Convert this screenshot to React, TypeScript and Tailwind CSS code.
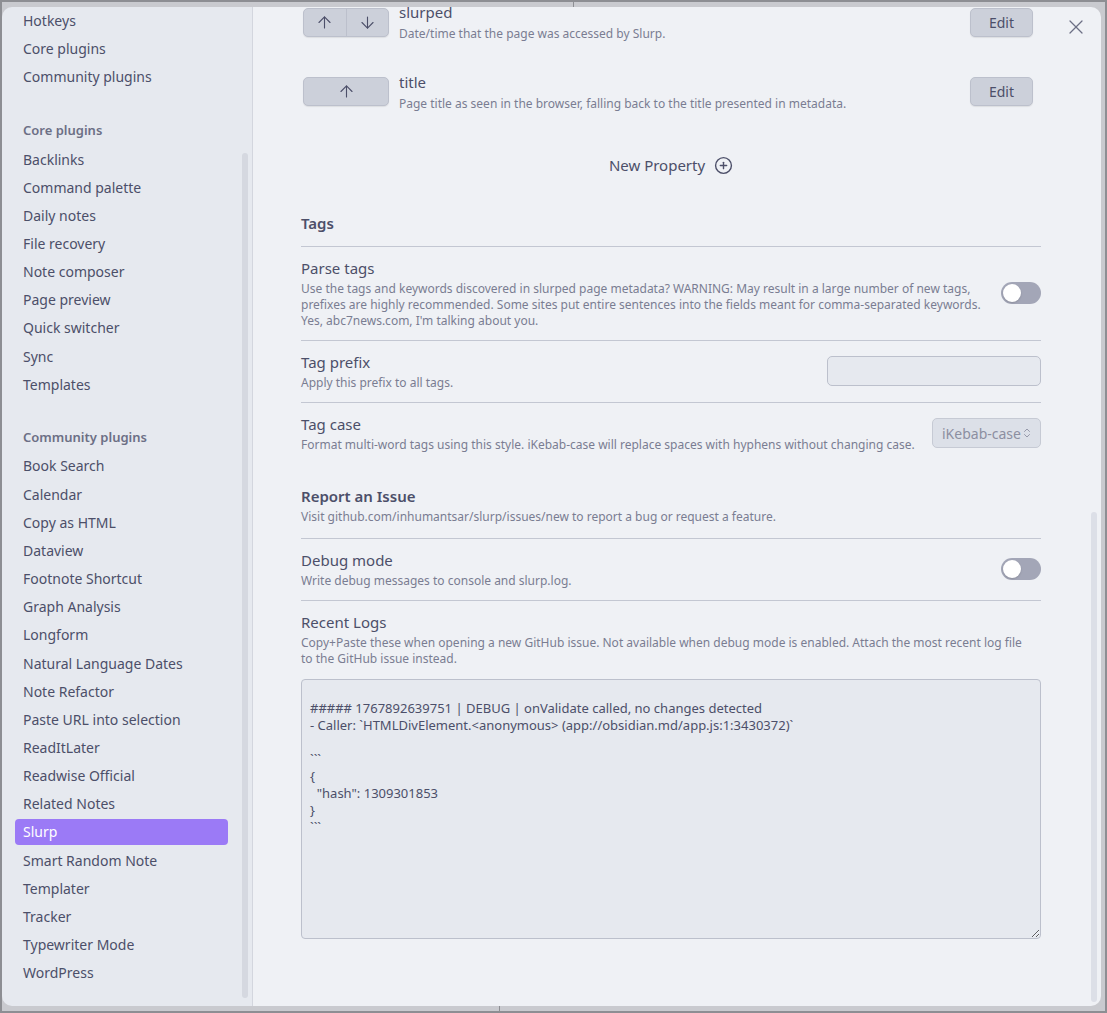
import { ArrowUp, ArrowDown, X, CirclePlus, ChevronsUpDown } from "lucide-react"

// --- Sidebar data ---
const topItems = ["Hotkeys", "Core plugins", "Community plugins"]
const coreItems = ["Backlinks", "Command palette", "Daily notes", "File recovery", "Note composer", "Page preview", "Quick switcher", "Sync", "Templates"]
const communityItems = [
    "Book Search", "Calendar", "Copy as HTML", "Dataview", "Footnote Shortcut", "Graph Analysis", "Longform",
    "Natural Language Dates", "Note Refactor", "Paste URL into selection", "ReadItLater", "Readwise Official",
    "Related Notes", "Slurp", "Smart Random Note", "Templater", "Tracker", "Typewriter Mode", "WordPress",
]

const logText = `
##### 1767892639751 | DEBUG | onValidate called, no changes detected
- Caller: \`HTMLDivElement.<anonymous> (app://obsidian.md/app.js:1:3430372)\`

\`\`\`
{
  "hash": 1309301853
}
\`\`\``

const NavItem = ({ label, active }: { label: string; active?: boolean }) => (
    <div className={`h-[26.17px] my-[1px] ml-[13px] mr-[24px] pl-[8px] rounded-[4px] flex items-center text-[14px] ${active ? "bg-[#9b7af6] text-white" : "text-[#4c4f69]"}`}>
        {label}
    </div>
)

const NavHeader = ({ label }: { label: string }) => (
    <div className="h-[29px] pl-[21px] flex items-center text-[13px] font-semibold text-[#6c6f85]">{label}</div>
)

const Toggle = () => (
    <div className="w-[40px] h-[22px] rounded-full bg-[#a3a6b7] flex items-center px-[2px] shrink-0">
        <div className="w-[18px] h-[18px] rounded-full bg-white shadow-[0_1px_2px_rgba(0,0,0,0.15)]" />
    </div>
)

const btn = "bg-[#ccd0da] border border-[#bcc0cc] shadow-[0_1px_1px_rgba(0,0,0,0.08)] text-[#4c4f69]"

const PropertyRow = ({ name, desc, down }: { name: string; desc: string; down?: boolean }) => (
    <div className="h-[69.5px] flex items-center">
        <div className={`ml-[2px] w-[86px] h-[29px] rounded-[5px] flex overflow-hidden ${btn}`}>
            <div className={`flex-1 flex items-center justify-center ${down ? "border-r border-[#bcc0cc]" : ""}`}>
                <ArrowUp size={19} strokeWidth={1.4} />
            </div>
            {down && (
                <div className="flex-1 flex items-center justify-center">
                    <ArrowDown size={19} strokeWidth={1.4} />
                </div>
            )}
        </div>
        <div className="ml-[10px] flex-1">
            <div className="text-[15px] leading-[20px] text-[#4c4f69]">{name}</div>
            <div className="mt-[4px] text-[12px] leading-[16px] text-[#7a7d92]">{desc}</div>
        </div>
        <div className={`mr-[8px] w-[63px] h-[29px] rounded-[5px] flex items-center justify-center text-[14px] ${btn}`}>Edit</div>
    </div>
)

const SettingItem = ({ name, children, control, border = true }: { name: string; children: React.ReactNode; control?: React.ReactNode; border?: boolean }) => (
    <div className={`py-[11px] flex items-center ${border ? "border-b border-[#c3c7d2]" : ""}`}>
        <div className="flex-1">
            <div className="text-[15px] leading-[20px] text-[#4c4f69]">{name}</div>
            <div className="mt-[3px] text-[12px] leading-[16px] text-[#7a7d92]">{children}</div>
        </div>
        {control}
    </div>
)

export default function App() {
    return (
        <div className="w-[1107px] h-[1013px] bg-[#c9cacf] border-2 border-[#8d8e93] relative overflow-hidden font-['Noto_Sans',sans-serif]">
            {/* bits of the window behind */}
            <div className="absolute left-[571px] top-0 w-[1px] h-[5px] bg-[#8d8e93]" />
            <div className="absolute left-[497px] bottom-0 w-[1px] h-[5px] bg-[#8d8e93]" />

            {/* Modal */}
            <div className="mt-[5px] w-[1099px] h-[999px] rounded-[10px] overflow-hidden flex relative">

                {/* Sidebar */}
                <div className="w-[251px] shrink-0 bg-[#e6e9ef] border-r border-[#d3d6de] relative overflow-hidden">
                    <div className="mt-[-1px] flex flex-col">
                        {topItems.map((it) => <NavItem key={it} label={it} />)}
                        <div className="h-[25.5px]" />
                        <NavHeader label="Core plugins" />
                        {coreItems.map((it) => <NavItem key={it} label={it} />)}
                        <div className="h-[24.5px]" />
                        <NavHeader label="Community plugins" />
                        {communityItems.map((it) => <NavItem key={it} label={it} active={it === "Slurp"} />)}
                    </div>
                    <div className="absolute left-[240px] top-[146px] w-[6px] h-[845px] rounded-full bg-[#d5d8e0]" />
                </div>

                {/* Content */}
                <div className="flex-1 bg-[#eff1f5] relative overflow-hidden">
                    <div className="w-[740px] ml-[48px] mt-[-19.75px]">
                        <PropertyRow name="slurped" desc="Date/time that the page was accessed by Slurp." down />
                        <PropertyRow name="title" desc="Page title as seen in the browser, falling back to the title presented in metadata." />

                        <div className="h-[77.5px] flex items-center justify-center gap-[9px] text-[15px] text-[#4c4f69]">
                            <span>New Property</span>
                            <CirclePlus size={19} strokeWidth={1.75} />
                        </div>

                        <div className="h-[43px] pb-[4px] flex items-center border-b border-[#c3c7d2] text-[15px] font-semibold text-[#4c4f69]">Tags</div>

                        <SettingItem name="Parse tags" control={<div className="ml-[20px]"><Toggle /></div>}>
                            Use the tags and keywords discovered in slurped page metadata? WARNING: May result in a large number of new tags,<br />
                            prefixes are highly recommended. Some sites put entire sentences into the fields meant for comma-separated keywords.<br />
                            Yes, abc7news.com, I'm talking about you.
                        </SettingItem>

                        <SettingItem name="Tag prefix" control={<div className="w-[214px] h-[30px] rounded-[5px] bg-[#e6e9ef] border border-[#bcc0cc]" />}>
                            Apply this prefix to all tags.
                        </SettingItem>

                        <SettingItem
                            name="Tag case"
                            border={false}
                            control={
                                <div className="w-[109px] h-[30px] shrink-0 rounded-[5px] bg-[#dce0e8] border border-[#c6cad4] flex items-center justify-between pl-[9px] pr-[7px] text-[14px] text-[#8c8fa1] whitespace-nowrap">
                                    <span>iKebab-case</span>
                                    <ChevronsUpDown size={12} strokeWidth={1.75} className="shrink-0" />
                                </div>
                            }
                        >
                            Format multi-word tags using this style. iKebab-case will replace spaces with hyphens without changing case.
                        </SettingItem>

                        <div className="pt-[22px] pb-[13px] border-b border-[#c3c7d2]">
                            <div className="text-[15px] leading-[20px] font-semibold text-[#4c4f69]">Report an Issue</div>
                            <div className="mt-[3px] text-[12px] leading-[16px] text-[#7a7d92]">
                                Visit github.com/inhumantsar/slurp/issues/new to report a bug or request a feature.
                            </div>
                        </div>

                        <SettingItem name="Debug mode" control={<Toggle />}>
                            Write debug messages to console and slurp.log.
                        </SettingItem>

                        <div className="pt-[11px]">
                            <div className="text-[15px] leading-[20px] text-[#4c4f69]">Recent Logs</div>
                            <div className="mt-[3px] text-[12px] leading-[16px] text-[#7a7d92] whitespace-nowrap">
                                Copy+Paste these when opening a new GitHub issue. Not available when debug mode is enabled. Attach the most recent log file<br />
                                to the GitHub issue instead.
                            </div>
                            <textarea
                                readOnly
                                defaultValue={logText}
                                className="mt-[12px] block w-full h-[260px] rounded-[4px] bg-[#e6e9ef] border border-[#bcc0cc] px-[8px] pt-[3px] text-[13px] leading-[17px] text-[#4c4f69] font-['Noto_Sans',sans-serif] outline-none whitespace-pre"
                            />
                        </div>
                    </div>

                    {/* scrollbar */}
                    <div className="absolute right-[4px] top-[505px] w-[6px] h-[490px] rounded-full bg-[#dcdfe7]" />
                </div>

                {/* Close */}
                <div className="absolute right-[13px] top-[8px] text-[#6c6f85]">
                    <X size={24} strokeWidth={1.25} />
                </div>
            </div>
        </div>
    )
}
